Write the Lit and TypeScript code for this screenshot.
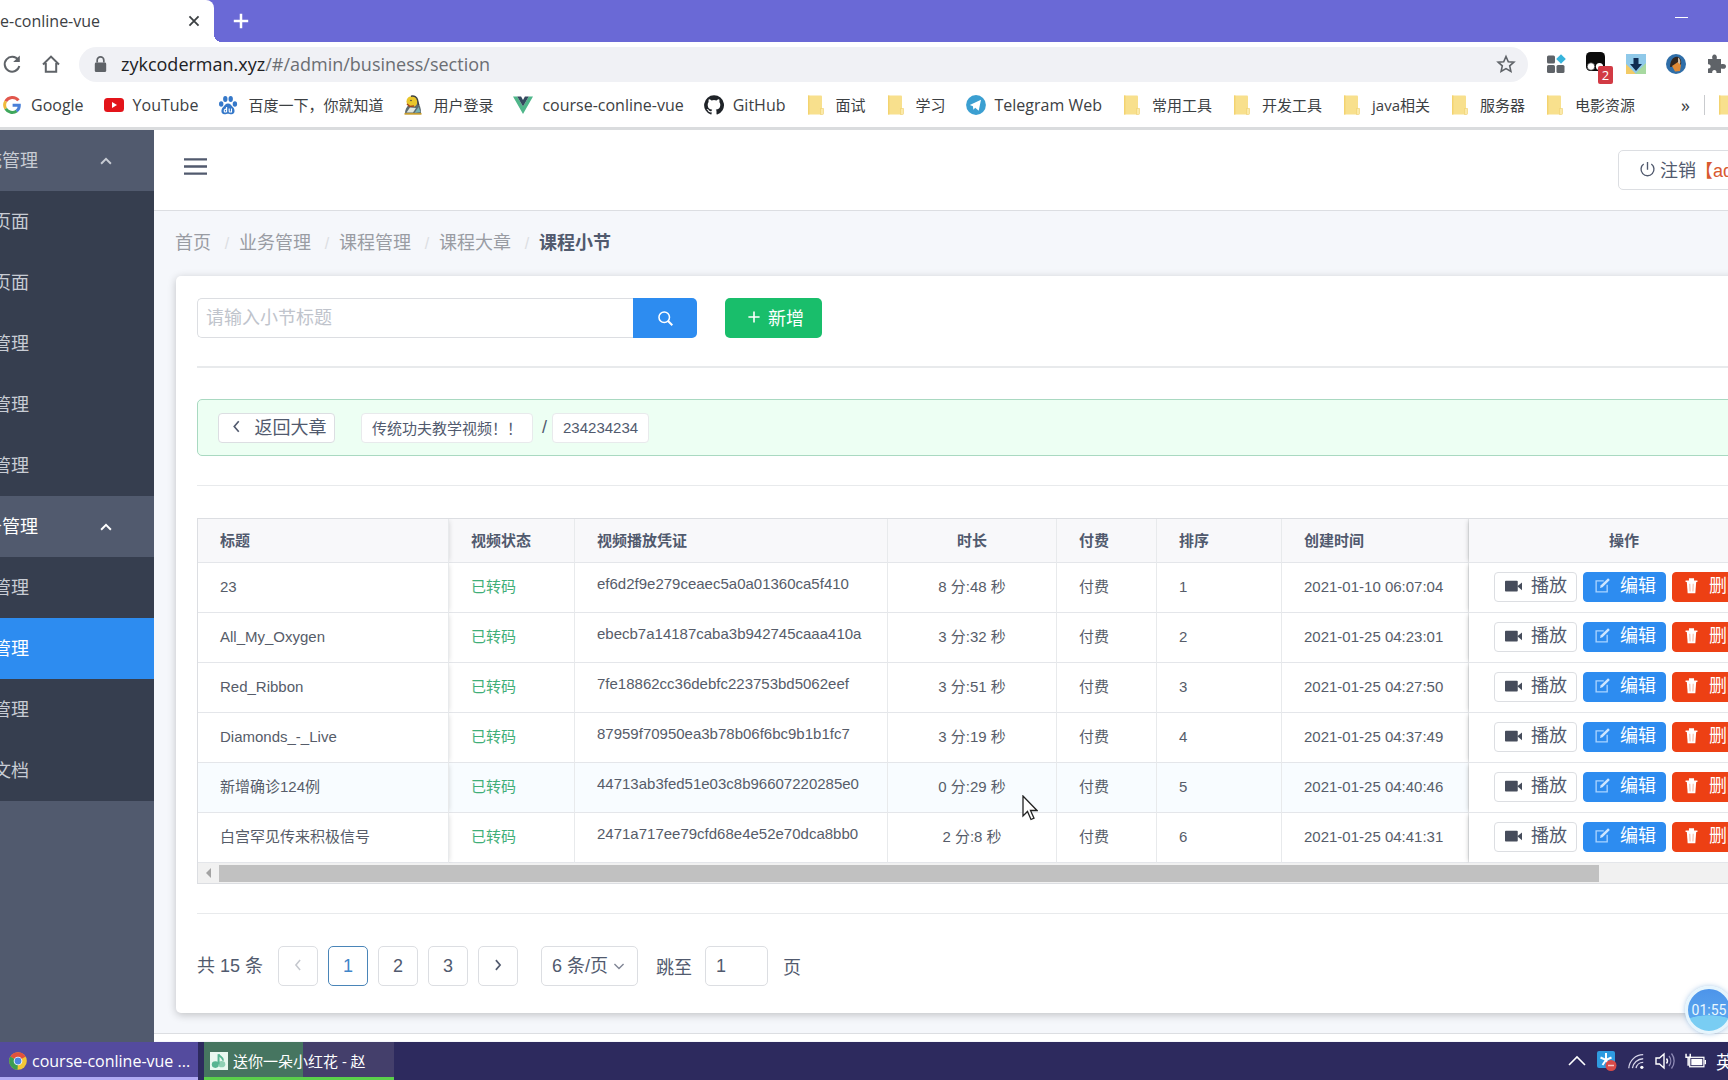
import { LitElement, html, css, svg, nothing } from "lit";
import { customElement, property } from "lit/decorators.js";
import { classMap } from "lit/directives/class-map.js";

const icons: Record<string, unknown> = {
  google: svg`<path d="M16.4 5.4A7.600 7.600 0 0 0 3.700 6.300" stroke="#e2574c" stroke-width="3"/><path d="M3.700 6.200a7.600 7.600 0 0 0 0 7.600" stroke="#f0b93a" stroke-width="3"/><path d="M3.700 13.800a7.600 7.600 0 0 0 11 2.200" stroke="#3fa75c" stroke-width="3"/><path d="M14.600 16.100A7.400 7.400 0 0 0 17.300 10.200H10.600" stroke="#4a80d8" stroke-width="3"/>`,
  youtube: svg`<rect x="0" y="3" width="20" height="14" rx="3.5" fill="#e3141a"/><path d="M8 7v6l5-3z" fill="#fff"/>`,
  baidu: svg`<g fill="#3578c9"><ellipse cx="3.2" cy="9" rx="2.2" ry="2.8"/><ellipse cx="7.3" cy="4" rx="2.2" ry="3"/><ellipse cx="12.7" cy="4" rx="2.2" ry="3"/><ellipse cx="16.9" cy="9" rx="2.2" ry="2.8"/><path d="M10 8.5c2.5 0 3.4 2.2 5 3.800 2 1.900 2.600 6.700-1.400 6.900-1.600.1-2.200-.5-3.600-.5s-2 .6-3.600.5c-4-.2-3.400-5-1.400-6.900 1.600-1.600 2.500-3.800 5-3.800z"/></g><path d="M8.600 12v5M8.600 14.200c-2.500-.6-3.200 2.600-1.300 2.800h1.300M11.200 13.600v2.400c0 1 .4 1.100 2.300 1v-3.400" stroke="#fff" stroke-width="1.100"/>`,
  tux: svg`<path d="M6.500 9c-3 3-4.700 6-4.500 9.500h16c.3-5-1.500-9.500-4-13z" fill="#5d6b70"/><circle cx="9" cy="6.500" r="5.500" fill="#e9c62b"/><path d="M8 1.200c3-.8 6 .6 6.600 4l1 5" stroke="#3e4140" stroke-width="1.500"/><path d="M4 9l3 2.500 4-.5" stroke="#a3451f" stroke-width="1.600"/><path d="M7 12.500l-3.500 5h6.500l3-4.500z" fill="#dfe7df"/><path d="M11.500 18l4-6 2 5" fill="#77b2b5"/><circle cx="8" cy="5.500" r=".8" fill="#444"/><path d="M1.500 18.800h17" stroke="#c59b2d" stroke-width="1.800"/>`,
  vue: svg`<path d="M0 1.500h4.200L10 11.500l5.800-10H20L10 19z" fill="#4fb68a"/><path d="M4.200 1.500h3.900L10 4.900l1.900-3.400h3.900L10 11.500z" fill="#34495e"/>`,
  github: svg`<path fill="#1f2328" fill-rule="evenodd" d="M10 .3a9.900 9.900 0 0 0-3.100 19.300c.5.100.7-.2.7-.5v-1.800c-2.800.6-3.400-1.200-3.400-1.200-.4-1.100-1.100-1.400-1.100-1.400-.9-.6.100-.6.100-.6 1 .1 1.500 1 1.500 1 .9 1.500 2.300 1.100 2.900.8.100-.6.400-1.100.6-1.300-2.200-.3-4.500-1.100-4.500-4.900 0-1.100.4-2 1-2.600-.1-.3-.4-1.300.1-2.700 0 0 .8-.3 2.700 1a9.500 9.500 0 0 1 5 0c1.900-1.300 2.700-1 2.700-1 .5 1.400.2 2.400.1 2.700.6.700 1 1.500 1 2.600 0 3.800-2.300 4.600-4.500 4.900.4.300.7.900.7 1.800v2.700c0 .3.200.6.700.5A9.900 9.900 0 0 0 10 .3z"/>`,
  folder: svg`<path d="M2 .5h13a1 1 0 0 1 1 1v17a1 1 0 0 1-1 1H2z" fill="#f8e08d"/><path d="M2 .5h1.400v19H2z" fill="#f3d36f"/><path d="M14.500 13.500h3v5a1 1 0 0 1-1 1h-2z" fill="#fbe9a8" stroke="#efcf6d" stroke-width=".6"/>`,
  telegram: svg`<circle cx="10" cy="10" r="9.900" fill="#3b9fd1"/><path d="M3.800 9.900L15 4.800l-2.300 10.900-3.500-2.900-1.800 2-.5-3.600z" fill="#fff"/>`,
  reload: svg`<path d="M16.200 6A7.400 7.400 0 1 0 17.300 12" stroke="#5f6368" stroke-width="2"/><path d="M17.800 1.500v6.600h-6.600z" fill="#5f6368"/>`,
  home: svg`<path d="M2 10.500L10 2.600l8 7.900M4.800 9v8.800h10.400V9" stroke="#5f6368" stroke-width="2"/>`,
  lock: svg`<rect x="4" y="8" width="12" height="10" rx="1.500" fill="#5f6368"/><path d="M6.500 8V5.500a3.500 3.500 0 0 1 7 0V8" stroke="#5f6368" stroke-width="1.800"/>`,
  star: svg`<path d="M10 2.500l2.300 5.200 5.600.5-4.200 3.700 1.200 5.500L10 14.600l-4.900 2.800 1.200-5.500-4.200-3.700 5.600-.5z" stroke="#5f6368" stroke-width="1.600"/>`,
  apps: svg`<g fill="#5f6368"><rect x="1" y="1.500" width="8" height="8" rx="1.500"/><rect x="1" y="11" width="8" height="8" rx="1.500"/><rect x="10.500" y="11" width="8" height="8" rx="1.500"/></g><path d="M15 .2l4.800 4.800L15 9.800 10.200 5z" fill="#37b4dc"/>`,
  monkey: svg`<rect x="0" y="0" width="19" height="19" rx="4.500" fill="#0b0b0b"/><circle cx="5" cy="14.500" r="3.800" fill="#fff" stroke="#333" stroke-width=".8"/><circle cx="13.500" cy="14.500" r="3.600" fill="#fff"/>`,
  download: svg`<rect width="20" height="20" fill="#8fc9e9"/><path d="M0 10l10 10h-10z" fill="#f2cb67"/><path d="M20 9v11h-11z" fill="#a7d9a0"/><path d="M7.500 4h5v6h3.500l-6 7-6-7h3.500z" fill="#0f2b52"/>`,
  avatar: svg`<circle cx="10" cy="10" r="10" fill="#2f6ea8"/><path d="M4 13C4 6 8 2 12 3c3 1 4 5 2.500 9z" fill="#33271f"/><path d="M6 12l6-4 3 3-1 6-5 .5z" fill="#e08a35"/><path d="M12 3.500c2 1 3 4 2 7l-2-2z" fill="#cdbba3"/>`,
  puzzle: svg`<path d="M2 5h4.500C5.500 2 7 .5 8.500 .5S11.500 2 10.700 5H15v5.300C19 9.500 20 11 20 12.500S19 15.400 15 14.600V19h-4.500c.7-4-5-4-4.300 0H2v-4.500c3.500.7 3.500-4.800 0-4.200z" fill="#5f6368"/>`,
  close: svg`<path d="M3.500 3.500l13 13M16.500 3.500l-13 13" stroke="#3c4043" stroke-width="2.600"/>`,
  plus: svg`<path d="M10 2v16M2 10h16" stroke="currentColor" stroke-width="2.800"/>`,
  thinPlus: svg`<path d="M10 3v14M3 10h14" stroke="currentColor" stroke-width="2"/>`,
  up: svg`<path d="M3 14l7-7 7 7" stroke="currentColor" stroke-width="2.800"/>`,
  down: svg`<path d="M3.500 7l6.500 6.500L16.500 7" stroke="currentColor" stroke-width="2"/>`,
  left: svg`<path d="M13 3l-6 7 6 7" stroke="currentColor" stroke-width="2.200"/>`,
  right: svg`<path d="M7 3l6 7-6 7" stroke="currentColor" stroke-width="2.400"/>`,
  menu: svg`<path d="M0 3.800h20M0 10h20M0 16.200h20" stroke="#515a6e" stroke-width="2"/>`,
  power: svg`<path d="M5.500 3.600a7.600 7.600 0 1 0 9 0M10 1.200v9" stroke="#515a6e" stroke-width="1.600"/>`,
  search: svg`<circle cx="8.500" cy="8.500" r="6.200" stroke="#fff" stroke-width="1.800"/><path d="M13 13l5 5" stroke="#fff" stroke-width="2.400"/>`,
  camera: svg`<rect x="0" y="4.500" width="15" height="12.500" rx="1" fill="#464c5b"/><path d="M14.500 10.800l5.500-4.300v9z" fill="#464c5b"/>`,
  edit: svg`<path d="M11.500 4.500H2.500v13h13V9" stroke="#a9d3ff" stroke-width="1.600"/><path d="M7 13l1-3.200L16.600 1.500l2 2L10 12z" fill="#cfe6ff"/>`,
  trash: svg`<path d="M3 4h14v2h-14zM7 1.500h6v2.500H7z" fill="#fff"/><path d="M4.500 6h11l-1 13h-9z" fill="#fff"/><path d="M8 8l.3 9M12 8l-.3 9" stroke="#f3a58e" stroke-width="1"/>`,
  chrome: svg`<circle cx="10" cy="10" r="9.800" fill="#f2c636"/><path d="M10 10L1.500 5.100A9.800 9.800 0 0 1 18.500 5.100z" fill="#e1523d"/><path d="M10 10L1.500 5.100A9.800 9.800 0 0 0 9.500 19.800z" fill="#3c9d52"/><circle cx="10" cy="10" r="4.800" fill="#fff"/><circle cx="10" cy="10" r="3.800" fill="#4c86e0"/>`,
  music: svg`<rect width="20" height="20" fill="#e9f8f0"/><ellipse cx="6" cy="14" rx="4" ry="3.700" fill="#58b592"/><ellipse cx="13" cy="13.500" rx="4" ry="3.500" fill="#8fd0b4"/><path d="M9.500 14V2.500c1 3 5.500 3 5 7" stroke="#58b592" stroke-width="2.200"/>`,
  caret: svg`<path d="M2 14l8-8 8 8" stroke="#fff" stroke-width="1.600"/>`,
  spark: svg`<rect x="0" y="0" width="18" height="17" rx="2" fill="#2f9be0"/><path d="M9 2v6M3.500 6.500L9 9l5.500-2.500M5.500 14L9 9l3.500 5" stroke="#fff" stroke-width="2"/><circle cx="14" cy="14.500" r="5.500" fill="#d94a48"/><path d="M11 14.500h6" stroke="#f6c7c4" stroke-width="1.500"/>`,
  wifi: svg`<path d="M2 18A16 16 0 0 1 18 3M6 18A12 12 0 0 1 18 7.500M10 18a8 8 0 0 1 8-6.500" stroke="#d8d6ea" stroke-width="1.400"/><circle cx="16.500" cy="17" r="1.800" fill="#fff"/>`,
  volume: svg`<path d="M1 7h3.500L9 3v14l-4.500-4H1z" stroke="#fff" stroke-width="1.400"/><path d="M11.500 7.500a4 4 0 0 1 0 5" stroke="#fff" stroke-width="1.400"/><path d="M14 5a8 8 0 0 1 0 10M16.500 2.500a12 12 0 0 1 0 15" stroke="#8f8bb5" stroke-width="1.300"/>`,
  battery: svg`<rect x="4.500" y="6" width="13.500" height="9" stroke="#fff" stroke-width="1.200"/><rect x="6" y="7.500" width="10.500" height="6" fill="#fff"/><path d="M19.300 8.500v4" stroke="#fff" stroke-width="1.400"/><path d="M1 2.500v3.500h4V2.500M3 6v8" stroke="#fff" stroke-width="1.400"/>`,
};

@customElement("ui-icon")
class UiIcon extends LitElement {
  @property() name = "";
  @property({ type: Number }) size = 20;
  static styles = css`
    :host { display: inline-flex; flex: none; }
    svg { display: block; }
  `;
  render() {
    return html`<svg width=${this.size} height=${this.size} viewBox="0 0 20 20" fill="none" aria-hidden="true">${icons[this.name]}</svg>`;
  }
}

const bookmarks = [
  ["google", "Google"],
  ["youtube", "YouTube"],
  ["baidu", "百度一下，你就知道"],
  ["tux", "用户登录"],
  ["vue", "course-conline-vue"],
  ["github", "GitHub"],
  ["folder", "面试"],
  ["folder", "学习"],
  ["telegram", "Telegram Web"],
  ["folder", "常用工具"],
  ["folder", "开发工具"],
  ["folder", "java相关"],
  ["folder", "服务器"],
  ["folder", "电影资源"],
];

const isLatin = (label: string) => /^[\x20-\x7e]+$/.test(label);

@customElement("browser-chrome")
class BrowserChrome extends LitElement {
  static styles = css`
    :host { display: block; font-family: "Open Sans", "Noto Sans CJK SC", sans-serif; color: #3c4043; }
    button { border: 0; padding: 0; background: none; display: inline-flex; align-items: center; justify-content: center; font: inherit; color: inherit; }
    a { color: inherit; text-decoration: none; }
    .tabs { height: 42px; background: #6a69d6; display: flex; align-items: center; color: #fff; }
    .tab { align-self: stretch; width: 214px; box-sizing: border-box; background: #fff; border-top-right-radius: 8px; display: flex; align-items: center; justify-content: space-between; padding-right: 13px; color: #3c4043; font-size: 16px; }
    .flare { align-self: flex-end; width: 8px; height: 8px; background: radial-gradient(circle at 100% 0, transparent 8px, #fff 8px); }
    .newtab { margin-left: 10px; }
    .minimize { margin-left: auto; margin-right: 40px; width: 14px; height: 20px; margin-bottom: 8px; }
    .minimize::before { content: ""; width: 13px; height: 1px; background: #fff; }
    .toolbar { display: flex; align-items: center; height: 44px; background: #fff; padding-left: 2px; }
    .toolbar > .home { margin-left: 19px; }
    .url { flex: 1; display: flex; align-items: center; height: 35px; margin-left: 18px; padding: 0 12px; border-radius: 18px; background: #f0f1f5; }
    .address { flex: 1; margin-left: 11px; font-size: 18px; line-height: 24px; color: #6b6e73; }
    .address b { font-weight: 400; color: #202124; }
    .extensions { display: flex; align-items: center; gap: 20px; margin-left: 18px; margin-right: 2px; }
    .badged { position: relative; }
    .badge { position: absolute; left: 12px; top: 14px; width: 15px; height: 18px; border-radius: 2px; background: #d23a44; color: #fff; font-size: 13px; line-height: 18px; text-align: center; }
    .bookmarks { display: flex; align-items: center; box-sizing: border-box; height: 44px; padding: 0 0 4px 2px; background: #fff; border-bottom: 3px solid #dadcde; white-space: nowrap; font-size: 15px; line-height: 24px; overflow: hidden; }
    .bookmark { flex: none; display: flex; align-items: center; gap: 10px; margin-right: 20px; }
    .latin { font-size: 16px; gap: 9px; }
    .more { margin-left: auto; margin-right: 14px; font-size: 18px; }
    .split { flex: none; width: 1px; height: 20px; background: #c9cbce; margin-right: 12px; }
    .last { flex: none; margin-right: -9px; }
  `;
  render() {
    return html`
      <div class="tabs">
        <div class="tab"><span>e-conline-vue</span><button aria-label="关闭"><ui-icon name="close" size="14"></ui-icon></button></div>
        <span class="flare"></span>
        <button class="newtab" aria-label="新标签页"><ui-icon name="plus" size="18"></ui-icon></button>
        <button class="minimize" aria-label="最小化"></button>
      </div>
      <div class="toolbar">
        <button aria-label="刷新"><ui-icon name="reload"></ui-icon></button>
        <button class="home" aria-label="主页"><ui-icon name="home"></ui-icon></button>
        <div class="url">
          <ui-icon name="lock" size="19"></ui-icon>
          <span class="address"><b>zykcoderman.xyz</b>/#/admin/business/section</span>
          <button aria-label="收藏"><ui-icon name="star"></ui-icon></button>
        </div>
        <div class="extensions">
          <ui-icon name="apps"></ui-icon>
          <span class="badged"><ui-icon name="monkey"></ui-icon><span class="badge">2</span></span>
          <ui-icon name="download"></ui-icon>
          <ui-icon name="avatar"></ui-icon>
          <ui-icon name="puzzle"></ui-icon>
        </div>
      </div>
      <nav class="bookmarks">
        ${bookmarks.map(
          ([icon, label]) =>
            html`<a class=${classMap({ bookmark: true, latin: isLatin(label) })} href="#"><ui-icon name=${icon}></ui-icon>${label}</a>`
        )}
        <button class="more" aria-label="更多书签">»</button>
        <span class="split"></span>
        <ui-icon class="last" name="folder"></ui-icon>
      </nav>
    `;
  }
}

const menu = [
  { title: "统管理", open: false, items: ["页面", "页面", "管理", "管理", "管理"], active: -1 },
  { title: "务管理", open: true, items: ["管理", "管理", "管理", "文档"], active: 1 },
];

@customElement("side-menu")
class SideMenu extends LitElement {
  static styles = css`
    :host { display: block; width: 154px; flex: none; background: #515a6e; overflow: hidden; color: #c8ccd4; font-size: 18px; }
    ul { list-style: none; margin: 0; padding: 0; background: #363e4f; }
    .title { display: flex; align-items: center; justify-content: space-between; width: 100%; height: 61px; border: 0; margin: 0; padding: 0 41px 0 0; background: none; color: inherit; font: inherit; }
    .title span { margin-left: -16px; padding-bottom: 4px; }
    .title.open { color: #fff; }
    .item { display: flex; align-items: center; height: 61px; color: inherit; text-decoration: none; }
    .item span { margin-left: -7px; padding-bottom: 4px; }
    .item.active { background: #2d8cf0; color: #fff; }
  `;
  render() {
    return html`${menu.map(
      (g) => html`
        <button class=${classMap({ title: true, open: g.open })}><span>${g.title}</span><ui-icon name="up" size="14"></ui-icon></button>
        <ul>
          ${g.items.map((t, i) => html`<li><a href="#" class=${classMap({ item: true, active: i === g.active })}><span>${t}</span></a></li>`)}
        </ul>
      `
    )}`;
  }
}

const rows = [
  ["23", "ef6d2f9e279ceaec5a0a01360ca5f410", "8 分:48 秒", "2021-01-10 06:07:04"],
  ["All_My_Oxygen", "ebecb7a14187caba3b942745caaa410a", "3 分:32 秒", "2021-01-25 04:23:01"],
  ["Red_Ribbon", "7fe18862cc36debfc223753bd5062eef", "3 分:51 秒", "2021-01-25 04:27:50"],
  ["Diamonds_-_Live", "87959f70950ea3b78b06f6bc9b1b1fc7", "3 分:19 秒", "2021-01-25 04:37:49"],
  ["新增确诊124例", "44713ab3fed51e03c8b96607220285e0", "0 分:29 秒", "2021-01-25 04:40:46"],
  ["白宫罕见传来积极信号", "2471a717ee79cfd68e4e52e70dca8bb0", "2 分:8 秒", "2021-01-25 04:41:31"],
];

@customElement("section-table")
class SectionTable extends LitElement {
  static styles = css`
    :host { display: block; border-top: 1px solid #dcdee2; border-left: 1px solid #dcdee2; border-bottom: 1px solid #dcdee2; }
    table { width: 100%; table-layout: fixed; border-collapse: separate; border-spacing: 0; font-size: 15px; line-height: 22px; color: #565c69; }
    .c-title { width: 251px; }
    .c-state { width: 126px; }
    .c-time { width: 169px; }
    .c-pay { width: 100px; }
    .c-order { width: 125px; }
    .c-created { width: 187px; }
    .c-action { width: 311px; }
    th, td { box-sizing: border-box; padding: 0 0 0 22px; text-align: left; border-right: 1px solid #e8eaec; border-bottom: 1px solid #e4e6ea; white-space: nowrap; }
    th { height: 44px; background: #f8f8fa; color: #515a6e; font-weight: 700; }
    td { height: 50px; padding-bottom: 2px; }
    .center { text-align: center; padding-left: 0; }
    .pin-left { box-shadow: 2px 0 5px -2px rgba(0, 0, 0, 0.16); clip-path: inset(0 -8px 0 0); }
    .pin-right { box-shadow: -2px 0 5px -2px rgba(0, 0, 0, 0.25); clip-path: inset(0 0 0 -8px); }
    .state { color: #3fae78; }
    .token { padding-bottom: 7px; }
    .hover td:not(.pin-right) { background: #f8fcff; }
    .actions { display: flex; justify-content: center; gap: 6px; padding-left: 1px; }
    .btn { box-sizing: border-box; width: 83px; height: 30px; padding: 0 0 2px 10px; display: inline-flex; align-items: center; gap: 9px; border: 1px solid #dcdee2; border-radius: 4px; background: #fff; color: #515a6e; font: inherit; font-size: 18px; line-height: 26px; }
    .btn.primary { background: #2d8cf0; border-color: #2d8cf0; color: #fff; }
    .btn.danger { background: #ed4014; border-color: #ed4014; color: #fff; }
    .scrollbar { display: flex; align-items: center; height: 20px; background: #f1f1f1; }
    .arrow { width: 21px; display: flex; justify-content: center; }
    .arrow::before { content: ""; border: 5px solid transparent; border-right-color: #a3a3a3; border-left: 0; }
    .thumb { height: 17px; background: #c1c1c1; }
  `;
  render() {
    return html`
      <table>
        <colgroup>
          <col class="c-title" /><col class="c-state" /><col /><col class="c-time" /><col class="c-pay" /><col class="c-order" /><col class="c-created" /><col class="c-action" />
        </colgroup>
        <thead>
          <tr>
            <th class="pin-left">标题</th><th>视频状态</th><th>视频播放凭证</th><th class="center">时长</th><th>付费</th><th>排序</th><th>创建时间</th><th class="center pin-right">操作</th>
          </tr>
        </thead>
        <tbody>
          ${rows.map(
            ([title, token, length, created], i) => html`
              <tr class=${i === 4 ? "hover" : nothing}>
                <td class="pin-left">${title}</td>
                <td class="state">已转码</td>
                <td class="token">${token}</td>
                <td class="center">${length}</td>
                <td>付费</td>
                <td>${i + 1}</td>
                <td>${created}</td>
                <td class="center pin-right">
                  <div class="actions">
                    <button class="btn"><ui-icon name="camera" size="17"></ui-icon>播放</button>
                    <button class="btn primary"><ui-icon name="edit" size="17"></ui-icon>编辑</button>
                    <button class="btn danger"><ui-icon name="trash" size="17"></ui-icon>删除</button>
                  </div>
                </td>
              </tr>
            `
          )}
        </tbody>
      </table>
      <div class="scrollbar"><span class="arrow"></span><span class="thumb" style="width: 87.2%"></span></div>
    `;
  }
}

@customElement("app-root")
class AppRoot extends LitElement {
  static styles = css`
    :host { display: flex; flex-direction: column; min-height: 100vh; overflow: hidden; position: relative; background: #fff; font-family: "Liberation Sans", "Noto Sans CJK SC", sans-serif; font-size: 18px; color: #515a6e; }
    a { color: inherit; text-decoration: none; }
    button, input, select { font: inherit; color: inherit; margin: 0; }
    .page { flex: 1; display: flex; }
    .main { flex: 1; min-width: 0; margin-right: -94px; display: flex; flex-direction: column; background: #f5f7fb; }
    header { display: flex; align-items: center; justify-content: space-between; height: 80px; padding: 0 21px 0 30px; background: #fff; border-bottom: 1px solid #dcdee2; }
    .toggle { display: flex; border: 0; padding: 0; background: none; margin-bottom: 7px; }
    .logout { box-sizing: border-box; width: 183px; height: 40px; padding: 0 0 2px 20px; display: flex; align-items: center; gap: 4px; border: 1px solid #dcdee2; border-radius: 5px; background: #fff; white-space: nowrap; overflow: hidden; }
    .who { color: #d8592f; margin-left: -5px; }
    .crumbs { box-sizing: border-box; display: flex; align-items: center; height: 65px; padding: 0 0 5px 21px; color: #999ca3; }
    .crumbs a::after { content: "/"; display: inline-block; width: 28px; text-align: center; color: #dcdee2; font-size: 16px; padding-left: 4px; box-sizing: border-box; }
    .crumbs strong { color: #515a6e; }
    .card { margin: 0 21px 20px 22px; padding: 22px 21px 27px; background: #fff; border-radius: 5px; box-shadow: 0 2px 8px rgba(0, 0, 0, 0.22); }
    .search { display: flex; }
    .search input { box-sizing: border-box; width: 436px; height: 40px; padding: 0 8px; border: 1px solid #dcdee2; border-right: 0; border-radius: 5px 0 0 5px; background: #fff; }
    .search input::placeholder { color: #c0c4cc; }
    .go { display: grid; place-items: center; width: 64px; height: 40px; padding: 0; border: 0; border-radius: 0 5px 5px 0; background: #2d8cf0; }
    .add { margin-left: 28px; height: 40px; padding: 0 18px 2px 21px; display: flex; align-items: center; gap: 6px; border: 0; border-radius: 5px; background: #19be6b; color: #fff; }
    hr { height: 1px; border: 0; margin: 0; background: #e8eaec; }
    .first { height: 2px; margin: 28px 0 31px; }
    .trail { box-sizing: border-box; height: 57px; margin-bottom: 29px; padding: 0 20px; display: flex; align-items: center; border: 1px solid #a9d9c1; border-radius: 5px; background: #edfff3; }
    .back { box-sizing: border-box; height: 30px; width: 117px; padding: 0 0 3px 2px; display: flex; align-items: center; justify-content: center; gap: 11px; border: 1px solid #dcdee2; border-radius: 4px; background: #fff; }
    .tag { box-sizing: border-box; height: 30px; padding: 0 10px; display: flex; align-items: center; border: 1px solid #e8eaec; border-radius: 4px; background: #fff; font-size: 15px; }
    .chapter { margin-left: 26px; }
    .slash { width: 19px; padding-left: 4px; box-sizing: border-box; text-align: center; }
    section-table { margin-top: 32px; }
    .third { margin: 29px 0 32px; }
    .pager { display: flex; align-items: center; white-space: nowrap; }
    .total { width: 81px; padding-bottom: 4px; }
    .num { box-sizing: border-box; width: 40px; height: 40px; margin-right: 10px; padding: 0; border: 1px solid #dcdee2; border-radius: 5px; background: #fff; }
    .num.current { border-color: #4a85b8; color: #3f86c9; }
    .num:disabled { color: #c5c8ce; }
    .size { display: grid; align-items: center; justify-items: end; margin: 0 18px 0 13px; }
    .size > * { grid-area: 1 / 1; }
    .size select { box-sizing: border-box; width: 97px; height: 40px; padding: 0 10px; appearance: none; border: 1px solid #dcdee2; border-radius: 5px; background: #fff; }
    .size ui-icon { margin-right: 12px; pointer-events: none; color: #808695; }
    .jump { display: flex; align-items: center; }
    .jump input { box-sizing: border-box; width: 63px; height: 40px; margin: 0 15px 0 13px; padding: 0 10px; border: 1px solid #dcdee2; border-radius: 5px; background: #fff; }
    .foot { height: 7px; border-top: 1px solid #dcdee2; background: #fff; }
    .taskbar { display: flex; align-items: stretch; gap: 6px; height: 38px; background: #2d2a5e; color: #fff; font-family: "Open Sans", "Noto Sans CJK SC", sans-serif; font-size: 15px; }
    .task { box-sizing: border-box; display: flex; align-items: center; gap: 5px; padding: 2px 0 0 6px; border: 0; border-bottom: 3px solid #5bd04b; background: linear-gradient(90deg, #467560 52%, #443f6b 52%); width: 190px; white-space: nowrap; font-size: 15px; color: #fff; }
    .task.browser { width: 198px; padding-left: 9px; border-bottom-color: #b1a9f4; background: #544b9e; font-size: 16px; }
    .tray { margin-left: auto; margin-right: -6px; display: flex; align-items: center; gap: 10px; font-size: 18px; }
    .ball { position: absolute; right: -5px; bottom: 46px; box-sizing: border-box; width: 48px; height: 48px; border: 3px solid #e6f5fd; border-radius: 50%; background: radial-gradient(ellipse 34px 16px at 50% 100%, #79cdf3 96%, transparent 100%), linear-gradient(#4d94ea, #5fadf0); box-shadow: 0 0 5px rgba(90, 150, 210, 0.5); color: #eaf8ff; font-family: Roboto, sans-serif; font-size: 14px; line-height: 42px; text-align: center; }
    .cursor { position: absolute; left: 1022px; top: 795px; }
  `;
  render() {
    return html`
      <browser-chrome></browser-chrome>
      <div class="page">
        <side-menu></side-menu>
        <main class="main">
          <header>
            <button class="toggle" aria-label="菜单"><ui-icon name="menu" size="23"></ui-icon></button>
            <button class="logout"><ui-icon name="power" size="17"></ui-icon>注销<span class="who">【ad</span></button>
          </header>
          <nav class="crumbs"><a href="#">首页</a><a href="#">业务管理</a><a href="#">课程管理</a><a href="#">课程大章</a><strong>课程小节</strong></nav>
          <section class="card">
            <div class="search">
              <input placeholder="请输入小节标题" aria-label="请输入小节标题" />
              <button class="go" aria-label="搜索"><ui-icon name="search" size="17"></ui-icon></button>
              <button class="add"><ui-icon name="thinPlus" size="16"></ui-icon>新增</button>
            </div>
            <hr class="first" />
            <div class="trail">
              <button class="back"><ui-icon name="left" size="15"></ui-icon>返回大章</button>
              <span class="tag chapter">传统功夫教学视频！！</span>
              <span class="slash">/</span>
              <span class="tag">234234234</span>
            </div>
            <hr />
            <section-table></section-table>
            <hr class="third" />
            <div class="pager">
              <span class="total">共 15 条</span>
              <button class="num" disabled aria-label="上一页"><ui-icon name="left" size="14"></ui-icon></button>
              <button class="num current">1</button>
              <button class="num">2</button>
              <button class="num">3</button>
              <button class="num" aria-label="下一页"><ui-icon name="right" size="14"></ui-icon></button>
              <span class="size"><select aria-label="每页条数"><option>6 条/页</option></select><ui-icon name="down" size="14"></ui-icon></span>
              <label class="jump">跳至<input value="1" />页</label>
            </div>
          </section>
          <div class="foot"></div>
        </main>
      </div>
      <footer class="taskbar">
        <button class="task browser"><ui-icon name="chrome" size="18"></ui-icon>course-conline-vue ...</button>
        <button class="task"><ui-icon name="music" size="18"></ui-icon>送你一朵小红花 - 赵</button>
        <div class="tray">
          <ui-icon name="caret"></ui-icon>
          <ui-icon name="spark"></ui-icon>
          <ui-icon name="wifi" size="18"></ui-icon>
          <ui-icon name="volume"></ui-icon>
          <ui-icon name="battery" size="21"></ui-icon>
          <span>英</span>
        </div>
      </footer>
      <div class="ball">01:55</div>
      <svg class="cursor" width="16" height="26" viewBox="0 0 16 26" aria-hidden="true"><path d="M1 1v20l4.500-4.500 3.500 8 3-1.300-3.500-7.700H15z" fill="#fff" stroke="#222" stroke-width="1.300" /></svg>
    `;
  }
}
